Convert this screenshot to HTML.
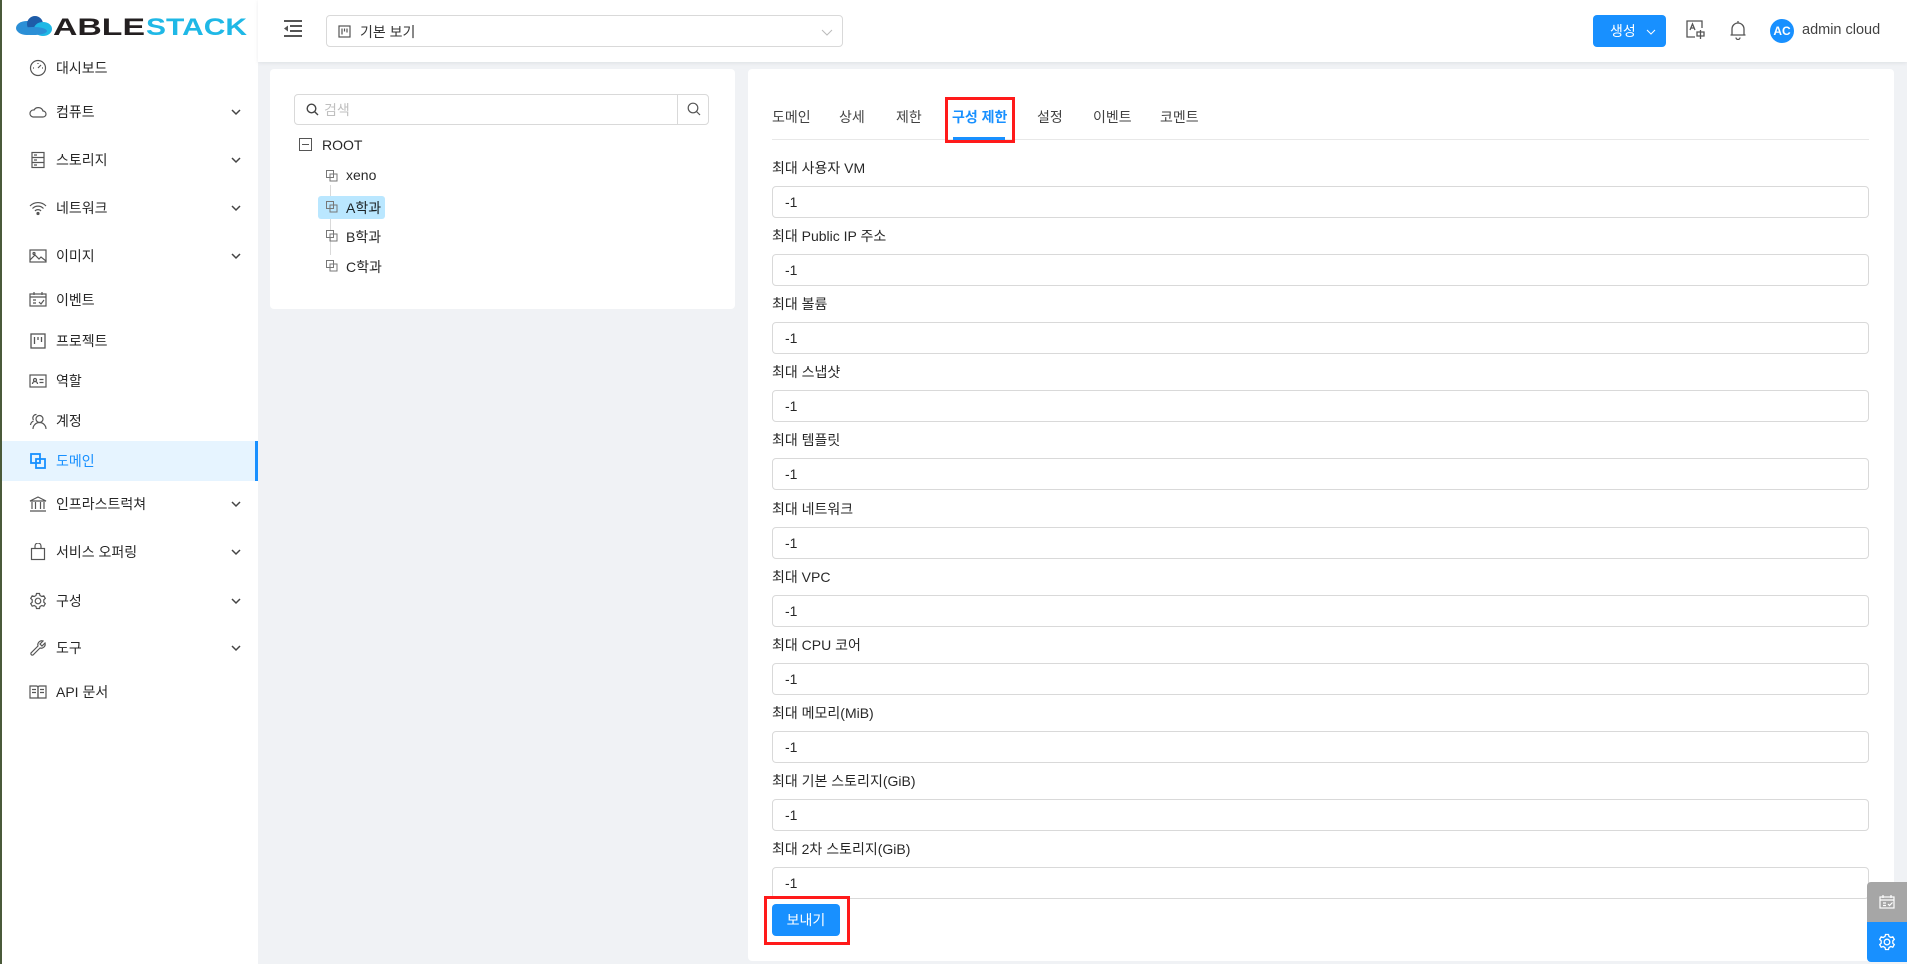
<!DOCTYPE html>
<html><head><meta charset="utf-8"><style>
*{box-sizing:border-box;margin:0;padding:0}
body{width:1907px;height:964px;overflow:hidden;background:#f0f2f5;font-family:"Liberation Sans","Noto Sans CJK KR",sans-serif;font-size:14px;color:rgba(0,0,0,.85);position:relative}
.abs{position:absolute}
#side{left:0;top:0;width:258px;height:964px;background:#fff;border-left:2px solid #4a5a3a}
.mi{position:absolute;left:0;width:256px;height:40px;display:flex;align-items:center}
.mi svg{position:absolute;left:27px}
.mi span{position:absolute;left:54px;font-size:14px;color:rgba(0,0,0,.85)}
.mi .ch{position:absolute;left:228px}
#hdr{left:258px;top:0;width:1649px;height:62px;background:#fff;box-shadow:0 1px 4px rgba(0,21,41,.08)}
.card{background:#fff;border-radius:4px}
.lbl{position:absolute;left:772px;font-size:14px}
.inp{position:absolute;left:772px;width:1097px;height:32px;border:1px solid #d9d9d9;border-radius:4px;background:#fff;padding-left:12px;line-height:30px}
.tab{position:absolute;top:107px;font-size:14px;color:rgba(0,0,0,.75)}
.ti{position:absolute;font-size:14px}
</style></head><body>
<div id="side" class="abs">
<svg class="abs" style="left:11px;top:13px" width="240" height="24" viewBox="0 0 240 24">
<ellipse cx="14" cy="15" rx="11" ry="7" fill="#2b8fd6"/><circle cx="22" cy="11" r="8" fill="#1e5ca8"/><ellipse cx="30" cy="16" rx="9" ry="7" fill="#1fb8e6"/><ellipse cx="20" cy="18" rx="14" ry="4" fill="#2b8fd6"/>
<text x="40" y="22" font-family="Liberation Sans" font-weight="bold" font-size="24" fill="#231f20" textLength="92" lengthAdjust="spacingAndGlyphs">ABLE</text>
<text x="133" y="22" font-family="Liberation Sans" font-weight="bold" font-size="24" fill="#1fb8e6" textLength="101" lengthAdjust="spacingAndGlyphs">STACK</text>
</svg>
<div class="mi" style="top:48px"><svg width="18" height="18" viewBox="0 0 18 18" fill="none" stroke="#555" stroke-width="1.2"><circle cx="9" cy="9" r="7.5"/><path d="M9 9l3-3M4 9h1M13 9h1M9 4v1"/></svg><span>대시보드</span></div>
<div class="mi" style="top:92px"><svg width="18" height="18" viewBox="0 0 18 18" fill="none" stroke="#555" stroke-width="1.2"><path d="M4 14h10a3 3 0 0 0 0-6 5 5 0 0 0-9-1 3.5 3.5 0 0 0-1 7z"/></svg><span>컴퓨트</span><svg class="ch" width="12" height="12" viewBox="0 0 12 12"><path d="M2 4l4 4 4-4" stroke="#444" fill="none" stroke-width="1.5"/></svg></div>
<div class="mi" style="top:140px"><svg width="18" height="18" viewBox="0 0 18 18" fill="none" stroke="#555" stroke-width="1.2"><rect x="3" y="1.5" width="12" height="15"/><path d="M3 6.5h12M3 11.5h12M5 4h3M5 9h3M5 14h3"/></svg><span>스토리지</span><svg class="ch" width="12" height="12" viewBox="0 0 12 12"><path d="M2 4l4 4 4-4" stroke="#444" fill="none" stroke-width="1.5"/></svg></div>
<div class="mi" style="top:188px"><svg width="18" height="18" viewBox="0 0 18 18" fill="none" stroke="#555" stroke-width="1.2"><path d="M1 7a11 11 0 0 1 16 0M3.5 9.5a7.5 7.5 0 0 1 11 0M6 12a4 4 0 0 1 6 0"/><circle cx="9" cy="14.5" r="1" fill="#555"/></svg><span>네트워크</span><svg class="ch" width="12" height="12" viewBox="0 0 12 12"><path d="M2 4l4 4 4-4" stroke="#444" fill="none" stroke-width="1.5"/></svg></div>
<div class="mi" style="top:236px"><svg width="18" height="18" viewBox="0 0 18 18" fill="none" stroke="#555" stroke-width="1.2"><rect x="1" y="3" width="16" height="12"/><path d="M1 13l5-5 4 4 2-2 5 4"/><circle cx="5" cy="6.5" r="1"/></svg><span>이미지</span><svg class="ch" width="12" height="12" viewBox="0 0 12 12"><path d="M2 4l4 4 4-4" stroke="#444" fill="none" stroke-width="1.5"/></svg></div>
<div class="mi" style="top:280px"><svg width="18" height="18" viewBox="0 0 18 18" fill="none" stroke="#555" stroke-width="1.2"><rect x="1" y="3" width="16" height="12"/><path d="M1 6h16M5 1v3M13 1v3M4 9h3M4 12h3M10 11l2 2 3-4"/></svg><span>이벤트</span></div>
<div class="mi" style="top:321px"><svg width="18" height="18" viewBox="0 0 18 18" fill="none" stroke="#555" stroke-width="1.3"><rect x="2" y="2" width="14" height="14"/><path d="M5.5 5v7M9 5v3M12.5 5v5"/></svg><span>프로젝트</span></div>
<div class="mi" style="top:361px"><svg width="18" height="18" viewBox="0 0 18 18" fill="none" stroke="#555" stroke-width="1.2"><rect x="1" y="3" width="16" height="12"/><circle cx="6" cy="8" r="1.5"/><path d="M3.5 12a2.5 2.5 0 0 1 5 0M10.5 7.5h4M10.5 10.5h4"/></svg><span>역할</span></div>
<div class="mi" style="top:401px"><svg width="18" height="18" viewBox="0 0 18 18" fill="none" stroke="#555" stroke-width="1.2"><circle cx="10.5" cy="7" r="3.5"/><path d="M4 17a6.5 6.5 0 0 1 13 0M7.5 2.5a3.5 3.5 0 0 0-3 5.5M1.5 13a5 5 0 0 1 3-4"/></svg><span>계정</span></div>
<div class="mi" style="top:441px;background:#e6f4ff;border-right:3px solid #1890ff"><svg width="18" height="18" viewBox="0 0 18 18" fill="none" stroke="#1890ff" stroke-width="1.8"><rect x="2" y="2" width="9" height="9"/><rect x="7" y="7" width="9" height="9"/></svg><span style="color:#1890ff">도메인</span></div>
<div class="mi" style="top:484px"><svg width="18" height="18" viewBox="0 0 18 18" fill="none" stroke="#555" stroke-width="1.2"><path d="M1 6l8-4 8 4zM3 7v7M6.5 7v7M11.5 7v7M15 7v7M1 16h16"/></svg><span>인프라스트럭쳐</span><svg class="ch" width="12" height="12" viewBox="0 0 12 12"><path d="M2 4l4 4 4-4" stroke="#444" fill="none" stroke-width="1.5"/></svg></div>
<div class="mi" style="top:532px"><svg width="18" height="18" viewBox="0 0 18 18" fill="none" stroke="#555" stroke-width="1.2"><rect x="2.5" y="5.5" width="13" height="11"/><path d="M6 5.5V3a3 3 0 0 1 6 0v2.5"/></svg><span>서비스 오퍼링</span><svg class="ch" width="12" height="12" viewBox="0 0 12 12"><path d="M2 4l4 4 4-4" stroke="#444" fill="none" stroke-width="1.5"/></svg></div>
<div class="mi" style="top:581px"><svg width="18" height="18" viewBox="0 0 18 18" fill="none" stroke="#555" stroke-width="1.2"><circle cx="9" cy="9" r="2.8"/><path d="M7.5 1.5h3l.5 2 1.8 1 2-.7 1.5 2.6-1.5 1.4v2.4l1.5 1.4-1.5 2.6-2-.7-1.8 1-.5 2h-3l-.5-2-1.8-1-2 .7-1.5-2.6 1.5-1.4V7.8L1.7 6.4l1.5-2.6 2 .7 1.8-1z"/></svg><span>구성</span><svg class="ch" width="12" height="12" viewBox="0 0 12 12"><path d="M2 4l4 4 4-4" stroke="#444" fill="none" stroke-width="1.5"/></svg></div>
<div class="mi" style="top:628px"><svg width="18" height="18" viewBox="0 0 18 18" fill="none" stroke="#555" stroke-width="1.2"><path d="M16 4l-3 3-2-2 3-3a4 4 0 0 0-5 5L2 14a1.5 1.5 0 0 0 2 2l7-7a4 4 0 0 0 5-5z"/></svg><span>도구</span><svg class="ch" width="12" height="12" viewBox="0 0 12 12"><path d="M2 4l4 4 4-4" stroke="#444" fill="none" stroke-width="1.5"/></svg></div>
<div class="mi" style="top:672px"><svg width="18" height="18" viewBox="0 0 18 18" fill="none" stroke="#555" stroke-width="1.2"><path d="M1 3h6.5a1.5 1.5 0 0 1 1.5 1.5V15 4.5A1.5 1.5 0 0 1 10.5 3H17v12H1z"/><path d="M3 6.5h4M3 9.5h4M11 6.5h4M11 9.5h4M9 4v11"/></svg><span>API 문서</span></div>
</div>

<div id="hdr" class="abs">
<svg class="abs" style="left:25px;top:19px" width="20" height="18" viewBox="0 0 20 18" fill="#555"><rect x="1" y="1" width="18" height="2"/><rect x="7" y="6" width="12" height="2"/><rect x="7" y="11" width="12" height="2"/><rect x="1" y="16" width="18" height="2"/><path d="M1 9.5l4-3v6z"/></svg>
<div class="abs" style="left:68px;top:15px;width:517px;height:32px;border:1px solid #d9d9d9;border-radius:4px">
<svg class="abs" style="left:11px;top:9px" width="13" height="13" viewBox="0 0 13 13" fill="none" stroke="#555" stroke-width="1.2"><rect x="1" y="1" width="11" height="11"/><path d="M4 3.5v6M6.5 3.5v3M9 3.5v4"/></svg>
<span class="abs" style="left:33px;top:6px;color:rgba(0,0,0,.8)">기본 보기</span>
<svg class="abs" style="left:494px;top:11px" width="12" height="10" viewBox="0 0 12 10"><path d="M1 3l5 5 5-5" stroke="#bbb" fill="none"/></svg>
</div>
<div class="abs" style="left:1335px;top:15px;width:73px;height:32px;background:#1890ff;border-radius:4px;color:#fff;padding:6px 0 0 17px">생성 <svg width="10" height="8" viewBox="0 0 10 8" style="margin-left:6px"><path d="M1 2l4 4 4-4" stroke="#fff" fill="none"/></svg></div>
<svg class="abs" style="left:1428px;top:20px" width="20" height="20" viewBox="0 0 20 20" fill="none" stroke="#555" stroke-width="1.3"><path d="M16 8V1H1v16h8"/><path d="M4 10l2.5-6L9 10M5 8h3"/><path d="M11 12h7v4h-7zM14.5 10v9"/></svg>
<svg class="abs" style="left:1472px;top:20px" width="16" height="20" viewBox="0 0 16 20" fill="none" stroke="#555" stroke-width="1.3"><path d="M2 15V9a6 6 0 0 1 12 0v6zM0.5 15h15M6 17.5a2 2 0 0 0 4 0M8 1v2"/></svg>
<div class="abs" style="left:1512px;top:19px;width:24px;height:24px;border-radius:50%;background:#1890ff;color:#fff;font-size:12px;font-weight:bold;text-align:center;line-height:24px">AC</div>
<span class="abs" style="left:1544px;top:22px;color:rgba(0,0,0,.75);font-size:14.5px">admin cloud</span>
</div>

<div class="abs card" style="left:270px;top:69px;width:465px;height:240px"></div>
<div class="abs" style="left:294px;top:94px;width:415px;height:31px;border:1px solid #d9d9d9;border-radius:4px;background:#fff">
<svg class="abs" style="left:11px;top:8px" width="13" height="13" viewBox="0 0 13 13" fill="none" stroke="#444" stroke-width="1.4"><circle cx="5.5" cy="5.5" r="4.3"/><path d="M8.7 8.7L12 12"/></svg>
<span class="abs" style="left:29px;top:5px;color:#bfbfbf">검색</span>
<div class="abs" style="left:382px;top:-1px;width:32px;height:31px;border-left:1px solid #d9d9d9"><svg class="abs" style="left:9px;top:8px" width="14" height="14" viewBox="0 0 14 14" fill="none" stroke="#555" stroke-width="1.2"><circle cx="6" cy="6" r="4.8"/><path d="M9.5 9.5L13 13"/></svg></div>
</div>
<svg class="abs" style="left:299px;top:138px" width="13" height="13" viewBox="0 0 13 13" fill="none" stroke="#555"><rect x="0.5" y="0.5" width="12" height="12"/><path d="M3 6.5h7"/></svg>
<span class="ti" style="left:322px;top:137px">ROOT</span>
<div class="abs" style="left:330px;top:185px;width:1px;height:70px;background:#d9d9d9"></div>
<div class="abs" style="left:318px;top:196px;width:67px;height:23px;background:#bae7ff;border-radius:3px"></div>
<svg class="abs" style="left:326px;top:170px" width="12" height="12" viewBox="0 0 12 12" fill="none" stroke="#777"><rect x="0.5" y="0.5" width="7" height="7" fill="#fff"/><rect x="4" y="4" width="7" height="7" fill="none"/></svg>
<span class="ti" style="left:346px;top:167px">xeno</span>
<svg class="abs" style="left:326px;top:201px" width="12" height="12" viewBox="0 0 12 12" fill="none" stroke="#777"><rect x="0.5" y="0.5" width="7" height="7"/><rect x="4" y="4" width="7" height="7"/></svg>
<span class="ti" style="left:346px;top:198px">A학과</span>
<svg class="abs" style="left:326px;top:230px" width="12" height="12" viewBox="0 0 12 12" fill="none" stroke="#777"><rect x="0.5" y="0.5" width="7" height="7" fill="#fff"/><rect x="4" y="4" width="7" height="7"/></svg>
<span class="ti" style="left:346px;top:227px">B학과</span>
<svg class="abs" style="left:326px;top:260px" width="12" height="12" viewBox="0 0 12 12" fill="none" stroke="#777"><rect x="0.5" y="0.5" width="7" height="7" fill="#fff"/><rect x="4" y="4" width="7" height="7"/></svg>
<span class="ti" style="left:346px;top:257px">C학과</span>

<div class="abs card" style="left:748px;top:69px;width:1146px;height:892px"></div>
<div class="abs" style="left:772px;top:139px;width:1097px;height:1px;background:#e8e8e8"></div>
<span class="tab" style="left:772px">도메인</span>
<span class="tab" style="left:839px">상세</span>
<span class="tab" style="left:896px">제한</span>
<span class="tab" style="left:952px;color:#1890ff;font-weight:bold">구성 제한</span>
<span class="tab" style="left:1037px">설정</span>
<span class="tab" style="left:1093px">이벤트</span>
<span class="tab" style="left:1160px">코멘트</span>
<div class="abs" style="left:953px;top:137px;width:52px;height:3px;background:#1890ff"></div>
<div class="abs" style="left:945px;top:97px;width:70px;height:46px;border:3px solid #ff1a1a"></div>

<span class="lbl" style="top:158px">최대 사용자 VM</span><div class="inp" style="top:186px">-1</div>
<span class="lbl" style="top:226px">최대 Public IP 주소</span><div class="inp" style="top:254px">-1</div>
<span class="lbl" style="top:294px">최대 볼륨</span><div class="inp" style="top:322px">-1</div>
<span class="lbl" style="top:362px">최대 스냅샷</span><div class="inp" style="top:390px">-1</div>
<span class="lbl" style="top:430px">최대 템플릿</span><div class="inp" style="top:458px">-1</div>
<span class="lbl" style="top:499px">최대 네트워크</span><div class="inp" style="top:527px">-1</div>
<span class="lbl" style="top:567px">최대 VPC</span><div class="inp" style="top:595px">-1</div>
<span class="lbl" style="top:635px">최대 CPU 코어</span><div class="inp" style="top:663px">-1</div>
<span class="lbl" style="top:703px">최대 메모리(MiB)</span><div class="inp" style="top:731px">-1</div>
<span class="lbl" style="top:771px">최대 기본 스토리지(GiB)</span><div class="inp" style="top:799px">-1</div>
<span class="lbl" style="top:839px">최대 2차 스토리지(GiB)</span><div class="inp" style="top:867px">-1</div>

<div class="abs" style="left:764px;top:896px;width:86px;height:49px;border:3px solid #ff1a1a"></div>
<div class="abs" style="left:772px;top:904px;width:68px;height:32px;background:#1890ff;border-radius:4px;color:#fff;text-align:center;line-height:32px">보내기</div>

<div class="abs" style="left:1867px;top:882px;width:40px;height:40px;background:#a6a6a6;border-radius:4px 0 0 0"><svg class="abs" style="left:12px;top:12px" width="16" height="16" viewBox="0 0 16 16" fill="none" stroke="#fff" stroke-width="1.2"><rect x="1" y="3" width="14" height="11"/><path d="M1 6h14M4 1v3M12 1v3M4 9h3M4 11.5h3M9 10l1.5 1.5 3-3"/></svg></div>
<div class="abs" style="left:1867px;top:922px;width:40px;height:40px;background:#1890ff;border-radius:0 0 0 4px"><svg class="abs" style="left:11px;top:11px" width="18" height="18" viewBox="0 0 18 18" fill="none" stroke="#fff" stroke-width="1.3"><circle cx="9" cy="9" r="2.8"/><path d="M7.5 1.5h3l.5 2 1.8 1 2-.7 1.5 2.6-1.5 1.4v2.4l1.5 1.4-1.5 2.6-2-.7-1.8 1-.5 2h-3l-.5-2-1.8-1-2 .7-1.5-2.6 1.5-1.4V7.8L1.7 6.4l1.5-2.6 2 .7 1.8-1z"/></svg></div>
</body></html>
